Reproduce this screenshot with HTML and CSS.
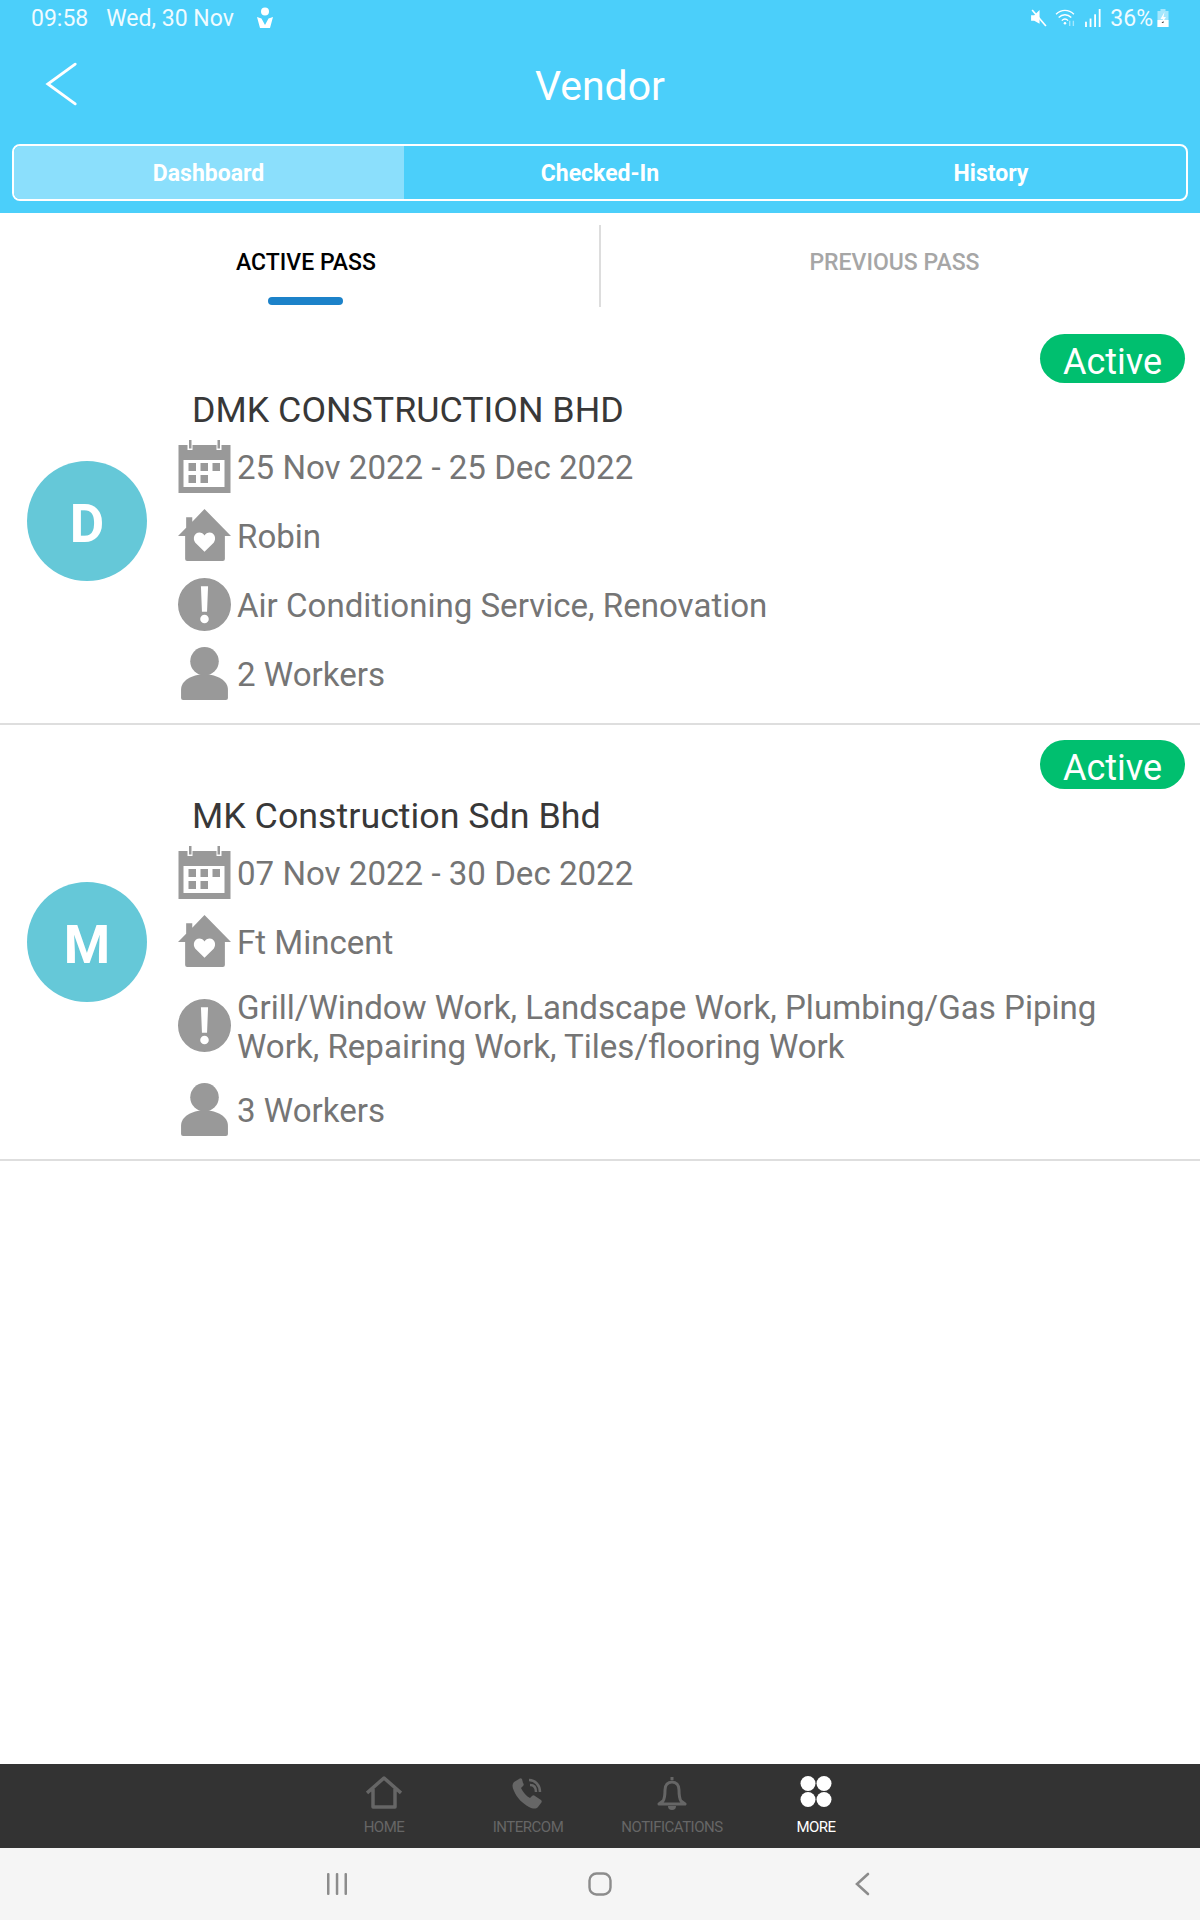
FILE: index.html
```html
<!DOCTYPE html>
<html lang="en">
<head>
  <meta charset="UTF-8" />
  <meta name="viewport" content="width=device-width, initial-scale=1" />
  <title>Vendor</title>
  <link rel="stylesheet" href="styles.css">
</head>
<body>
  <svg class="icon-defs" width="0" height="0">
    <symbol id="ic-calendar" viewBox="0 0 52 53">
      <path fill-rule="evenodd" d="M0 5h9v5h5V5h24v5h5V5h9v48H0zM5 20v27h41V20z"/>
      <rect x="10.500" y="0" width="2.500" height="8.500"/><rect x="39" y="0" width="2.500" height="8.500"/>
      <rect x="10" y="23" width="7.500" height="8"/><rect x="22" y="23" width="7.500" height="8"/><rect x="34" y="23" width="7.500" height="8"/>
      <rect x="10" y="35" width="7.500" height="8"/><rect x="22" y="35" width="7.500" height="8"/>
    </symbol>
    <symbol id="ic-house" viewBox="0 0 52 52">
      <path fill-rule="evenodd" d="M26 0 52 26.500H46V49a2 2 0 0 1-2 2H9a2 2 0 0 1-2-2V26.500H0L8 18.500V8h6v4.500zM26 42 17 33c-3-4-1-10 4-10 2 0 4 1 5 3 1-2 3-3 5-3 5 0 7 6 4 10z"/>
    </symbol>
    <symbol id="ic-alert" viewBox="0 0 52 52">
      <path fill-rule="evenodd" d="M26 0a26 26 0 1 1 0 52a26 26 0 0 1 0-52zM22.500 8l1 25h5l1-25zM26 36a4.200 4.200 0 1 0 0 8.400a4.200 4.200 0 0 0 0-8.400z"/>
    </symbol>
    <symbol id="ic-person" viewBox="0 0 52 52">
      <circle cx="26" cy="14" r="14"/>
      <path d="M5 52a2 2 0 0 1-2-2V42c0-9 10-15 23-15s23 6 23 15v8a2 2 0 0 1-2 2z"/>
    </symbol>
  </svg>

  <div class="app">
    <header class="top">
      <div class="status-bar">
        <span>09:58</span>
        <span>Wed, 30 Nov</span>
        <svg class="status-pin" viewBox="0 0 18 22"><circle cx="9" cy="4.500" r="4"/><path d="M1 10l4.500 1.500L9 18l3.500-6.500L17 10l-3 11H4z"/></svg>
        <span class="status-right">
          <svg class="status-mute" viewBox="0 0 16 17"><path d="M1 6h3l5-5v13L4 11H1z" fill="#fff"/><path d="M2 1l13 15" stroke="#fff" stroke-width="1.600"/></svg>
          <svg class="status-wifi" viewBox="0 0 20 17" fill="none" stroke="#fff" stroke-width="1.300"><path d="M1 5c5-5 12-5 17 0M3.500 8c3.500-3.500 8.500-3.500 12 0M6.500 11c1.800-1.800 4.200-1.800 6 0"/><circle cx="9.500" cy="13.500" r="1.200" fill="#fff" stroke="none"/><path d="M14 11v5M17.500 16v-5" stroke="#a5e7fd"/></svg>
          <svg class="status-signal" viewBox="0 0 16 17" fill="#fff"><rect x="1" y="12" width="1.700" height="5"/><rect x="5.300" y="9" width="1.700" height="8"/><rect x="9.600" y="5" width="1.700" height="12"/><rect x="13.900" y="0" width="1.700" height="17"/></svg>
          <span>36%</span>
          <svg class="status-batt" viewBox="0 0 13 18"><path d="M4 0h5v2h3v16H1V2h3z" fill="#a5e7fd"/><path d="M1 11h11v7H1z" fill="#fff"/><path d="M8 3 4 10h2.500L5 15l4.500-7H7z" fill="#fff"/><path d="M5 14l2-2v2z" fill="#333"/></svg>
        </span>
      </div>

      <div class="toolbar">
        <svg class="back" viewBox="0 0 36 48" fill="none" stroke="#fff" stroke-width="3" stroke-linecap="round"><path d="M32 3 3 24l29 21"/></svg>
        <h1 class="title">Vendor</h1>
      </div>

      <nav class="segments">
        <a class="segment segment-active">Dashboard</a>
        <a class="segment">Checked-In</a>
        <a class="segment">History</a>
      </nav>
    </header>

    <div class="pass-tabs">
      <div class="pass-tab pass-tab-active">ACTIVE PASS<span class="pass-bar"></span></div>
      <div class="pass-tab pass-tab-other">PREVIOUS PASS</div>
    </div>

    <main class="list">
      <article class="card">
        <span class="badge">Active</span>
        <div class="avatar">D</div>
        <div class="details">
          <h2 class="name">DMK CONSTRUCTION BHD</h2>
          <div class="row"><svg class="row-icon"><use href="#ic-calendar"/></svg><span>25 Nov 2022 - 25 Dec 2022</span></div>
          <div class="row"><svg class="row-icon"><use href="#ic-house"/></svg><span>Robin</span></div>
          <div class="row"><svg class="row-icon"><use href="#ic-alert"/></svg><span>Air Conditioning Service, Renovation</span></div>
          <div class="row"><svg class="row-icon"><use href="#ic-person"/></svg><span>2 Workers</span></div>
        </div>
      </article>

      <article class="card">
        <span class="badge">Active</span>
        <div class="avatar">M</div>
        <div class="details">
          <h2 class="name">MK Construction Sdn Bhd</h2>
          <div class="row"><svg class="row-icon"><use href="#ic-calendar"/></svg><span>07 Nov 2022 - 30 Dec 2022</span></div>
          <div class="row"><svg class="row-icon"><use href="#ic-house"/></svg><span>Ft Mincent</span></div>
          <div class="row row-tall"><svg class="row-icon"><use href="#ic-alert"/></svg><span>Grill/Window Work, Landscape Work, Plumbing/Gas Piping Work, Repairing Work, Tiles/flooring Work</span></div>
          <div class="row"><svg class="row-icon"><use href="#ic-person"/></svg><span>3 Workers</span></div>
        </div>
      </article>
    </main>

    <nav class="bottom-nav">
      <a class="nav-item">
        <svg class="nav-icon" viewBox="0 0 36 36" fill="none" stroke="#666" stroke-width="3.500"><path d="M1 18 18 3l17 15M7 14v18h22V14" stroke-linejoin="round"/></svg>
        HOME
      </a>
      <a class="nav-item">
        <svg class="nav-icon" viewBox="0 0 36 36" fill="#666"><path d="M9 4 4 7c-2 2-2 5 0 9 3 7 8 12 15 16 4 2 7 2 9 0l3-4c1-1 1-2 0-3l-6-4c-1-1-2-1-3 0l-2 2c-4-2-7-6-9-10l2-2c1-1 1-2 0-3L12 4c-1-1-2-1-3 0z"/><path d="M19 5c6 0 11 5 11 12M20 10c4 0 6 3 6 7" fill="none" stroke="#666" stroke-width="2.500"/></svg>
        INTERCOM
      </a>
      <a class="nav-item">
        <svg class="nav-icon" viewBox="0 0 36 36" fill="none" stroke="#666" stroke-width="3"><path d="M18 2v3M9 26c2-3 2-6 2-11 0-5 3-8 7-8s7 3 7 8c0 5 0 8 2 11l4 3H5z" stroke-linejoin="round"/><path d="M14 31a4 4 0 0 0 8 0z" fill="#666" stroke="none"/></svg>
        NOTIFICATIONS
      </a>
      <a class="nav-item nav-item-active">
        <svg class="nav-icon" viewBox="0 0 36 36" fill="#fff"><circle cx="10" cy="8.500" r="7.500"/><circle cx="26" cy="8.500" r="7.500"/><circle cx="10" cy="24.500" r="7.500"/><circle cx="26" cy="24.500" r="7.500"/></svg>
        MORE
      </a>
    </nav>

    <div class="system-nav">
      <svg class="sys-icon" viewBox="0 0 24 24" fill="#8c8c8c"><rect x="2" y="1" width="2.500" height="22" rx="1"/><rect x="10.800" y="1" width="2.500" height="22" rx="1"/><rect x="19.500" y="1" width="2.500" height="22" rx="1"/></svg>
      <svg class="sys-icon" viewBox="0 0 24 24" fill="none" stroke="#8c8c8c" stroke-width="2.400"><rect x="1.500" y="1.500" width="21" height="21" rx="7"/></svg>
      <svg class="sys-icon" viewBox="0 0 24 24" fill="none" stroke="#8c8c8c" stroke-width="2.600" stroke-linecap="round"><path d="M17 2 6 12l11 10"/></svg>
    </div>
  </div>
</body>
</html>
```

FILE: styles.css
```css
/* Base */
* {
  box-sizing: border-box;
}

body {
  margin: 0;
  font-family: Roboto, sans-serif;
  background-color: #fff;
}

.icon-defs {
  position: absolute;
}

.app {
  height: 1920px;
  display: flex;
  flex-direction: column;
}

/* Blue header */
.top {
  height: 213px;
  background-color: #4bcffa;
  color: #fff;
}

.status-bar {
  height: 36px;
  padding: 0 30px 0 31px;
  display: flex;
  align-items: center;
  gap: 18px;
  font-size: 23px;
  color: #f0fbff;
}

.status-pin {
  width: 18px;
  height: 22px;
  margin-left: 4px;
  fill: #fff;
}

.status-right {
  margin-left: auto;
  display: flex;
  align-items: center;
  gap: 8px;
}

.status-mute {
  width: 17px;
  height: 18px;
}

.status-wifi {
  width: 21px;
  height: 18px;
}

.status-signal {
  width: 17px;
  height: 18px;
  margin-right: 1px;
}

.status-batt {
  width: 14px;
  height: 18px;
  margin-left: -5px;
}

.toolbar {
  height: 108px;
  display: flex;
  align-items: center;
  justify-content: center;
  position: relative;
  padding-bottom: 8px;
}

.back {
  position: absolute;
  left: 45px;
  top: 24px;
  width: 34px;
  height: 48px;
}

.title {
  margin: 0;
  font-size: 41px;
  font-weight: 400;
}

.segments {
  height: 57px;
  margin: 0 12px;
  display: grid;
  grid-template-columns: 390px 392px 1fr;
  border: 2px solid #fff;
  border-radius: 8px;
  overflow: hidden;
}

.segment {
  display: flex;
  align-items: center;
  justify-content: center;
  padding-top: 2px;
  font-size: 23px;
  font-weight: 700;
}

.segment-active {
  padding-right: 1px;
  background-color: #8bdffc;
}

/* Active / previous */
.pass-tabs {
  height: 106px;
  margin: 0 12px;
  padding-top: 12px;
  display: grid;
  grid-template-columns: 1fr 1fr;
}

.pass-tab {
  height: 82px;
  padding-top: 24px;
  position: relative;
  text-align: center;
  font-size: 23px;
  font-weight: 500;
  line-height: 27px;
  color: #a6a6a6;
}

.pass-tab-active {
  color: #000;
}

.pass-tab-other {
  margin-left: -1px;
  border-left: 2px solid #ddd;
}

.pass-bar {
  position: absolute;
  left: 256px;
  top: 72px;
  width: 75px;
  height: 8px;
  border-radius: 4px;
  background-color: #1c82c9;
}

/* Cards */
.list {
  flex: 1;
}

.card {
  position: relative;
  padding: 0 40px 0 27px;
  display: flex;
  align-items: center;
  gap: 31px;
  border-bottom: 2px solid #dedede;
}

.badge {
  position: absolute;
  right: 15px;
  top: 15px;
  width: 145px;
  height: 49px;
  border-radius: 25px;
  background-color: #00bf6f;
  color: #fff;
  font-size: 36px;
  line-height: 56px;
  text-align: center;
}

.avatar {
  flex: none;
  width: 120px;
  height: 120px;
  border-radius: 50%;
  background-color: #65c8d8;
  color: #fff;
  font-size: 53px;
  font-weight: 700;
  line-height: 126px;
  text-align: center;
}

.details {
  flex: 1;
  min-width: 0;
  padding: 69px 0 15px;
}

.name {
  margin: 0 0 0 14px;
  font-size: 35.800px;
  font-weight: 400;
  line-height: 44px;
  color: #383838;
}

.row {
  min-height: 69px;
  display: flex;
  align-items: center;
  gap: 6px;
  font-size: 33.100px;
  line-height: 39px;
  color: #757575;
}

.row span {
  padding-top: 2px;
}

.row-tall {
  min-height: 99px;
}

.row-tall span {
  padding-top: 3px;
}

.row-icon {
  flex: none;
  width: 53px;
  height: 53px;
  fill: #999;
}

/* Bottom bars */
.bottom-nav {
  height: 84px;
  padding-left: 312px;
  display: flex;
  background-color: #333;
}

.nav-item {
  width: 144px;
  padding-top: 11px;
  display: flex;
  flex-direction: column;
  align-items: center;
  font-size: 15px;
  letter-spacing: -0.5px;
  line-height: 20px;
  color: #666;
}

.nav-item-active {
  color: #fff;
}

.nav-icon {
  width: 36px;
  height: 36px;
  margin-bottom: 6px;
}

.system-nav {
  height: 72px;
  background-color: #f5f5f5;
  display: grid;
  grid-template-columns: repeat(3, 263px);
  justify-content: center;
  align-items: center;
  justify-items: center;
}

.sys-icon {
  width: 24px;
  height: 24px;
}
```
